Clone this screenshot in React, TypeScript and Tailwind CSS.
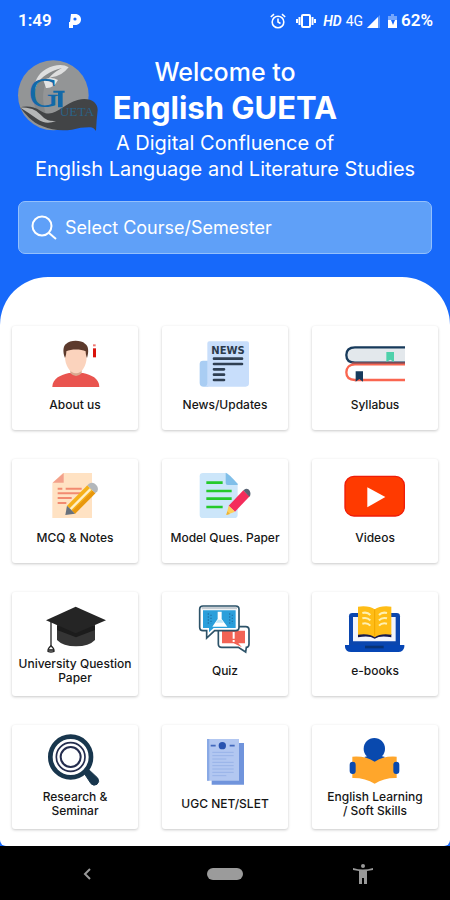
import { ReactNode } from "react";

function AboutIcon() {
    return (
        <>
            <path d="M22 141c0-26 26-37 50-42h42c24 5 49 16 49 42z" fill="#e9544f" />
            <path d="M76 84h34v16q-17 16-34 0z" fill="#d9a88f" />
            <path d="M60 28q32-12 65 0v22c0 26-14 50-32 50S60 76 60 50z" fill="#fbd3bd" />
            <path d="M60 54c-8-20-5-38 4-43 10-11 44-12 56 0 11 6 12 25 6 43-3-6-4-14-4-20-14-7-44-7-58 0 0 6-1 14-4 20z" fill="#5c3a2c" />
            <path d="M144 25h9v27h-9z" fill="#d9120b" />
            <path d="M144 13h8v6h-8z" fill="#ef7771" />
        </>
    );
}

function NewsIcon() {
    return (
        <>
            <path d="M24 62h16v78H26q-12 0-12-12V72q0-10 10-10z" fill="#a9cdf3" />
            <path d="M37 10q0-6 6-6h113q6 0 6 6v120q0 10-10 10H28q9-2 9-12z" fill="#c8defb" />
            <text x="99" y="42" textAnchor="middle" fontSize="30" fontWeight="700" fill="#2b3a4c" className="font-['DejaVu_Sans']">
                NEWS
            </text>
            <path d="M57 56h84M57 72h84M57 88h30M57 104h30M57 120h30" stroke="#2f3f52" strokeWidth="8" strokeLinecap="round" />
        </>
    );
}

function BooksIcon() {
    return (
        <>
            <path d="M180 23H28q-21 3-21 22t21 22h152z" fill="#e3e8ec" />
            <path d="M180 22H30C12 22 4 32 4 45s8 23 26 23h150" fill="none" stroke="#173a5b" strokeWidth="7" />
            <path d="M180 73H30C12 73 4 84 4 97s8 23 26 23h150" fill="none" stroke="#fa6650" strokeWidth="7" />
            <path d="M20 69h160" stroke="#9c5055" strokeWidth="5" />
            <path d="M124 36h23v30l-11-7-12 7z" fill="#4fd1ab" />
            <path d="M32 94h22v31l-11-8-11 8z" fill="#173a5b" />
        </>
    );
}

function NotesIcon() {
    return (
        <>
            <path d="M54 0h87v135H22V30z" fill="#ffe2c3" />
            <path d="M56 0v29H23z" fill="#f3a08b" />
            <path d="M38 47h14M62 47h48M38 61h72M38 75h42M38 90h26" stroke="#f28a70" strokeWidth="6" />
            <path d="m66 98 61-61 24 24-61 61z" fill="#f5b019" />
            <path d="m74 106 60-60 5 5-60 60z" fill="#fff0c6" />
            <path d="m82 114 61-61 8 8-61 61z" fill="#e8970d" />
            <path d="m127 37 5-5q12-6 21 3t4 20l-6 6z" fill="#b3b7bb" />
            <path d="m66 98-5 28 29-4z" fill="#68717c" />
        </>
    );
}

function ModelIcon() {
    return (
        <>
            <path d="M24 0h68l36 36v89q0 10-10 10H24q-10 0-10-10V10Q14 0 24 0z" fill="#cce6fa" />
            <path d="M92-1q6 0 36 33v4H98q-6 0-6-6z" fill="#80bfe9" />
            <path d="M34 29h49M34 54h76M34 77h76M34 102h49" stroke="#24ca2b" strokeWidth="8" />
            <path d="m101 98 44-46 19 18-44 46z" fill="#f42c5b" />
            <path d="m145 52 6-4q9-2 13 5t2 14l-3 4z" fill="#596474" />
            <path d="m101 98 19 18-26 10z" fill="#ffd05a" />
            <path d="m94 126 3-11 8 8z" fill="#eab239" />
        </>
    );
}

function VideoIcon() {
    return (
        <>
            <rect x="0" y="10" width="178" height="119" rx="27" fill="#ff3a00" stroke="#ef1c08" strokeWidth="4" />
            <path d="m67 43 54 29-54 31z" fill="#fff" />
        </>
    );
}

function CapIcon() {
    return (
        <>
            <path d="M36 58h114v44q-18 19-57 19t-57-19z" fill="#353535" />
            <path d="M36 58v14l57 22 57-22V58z" fill="#1c1c1c" />
            <path d="m92 2 91 41-91 39L3 43z" fill="#252525" />
            <path d="M18 48v72" stroke="#252525" strokeWidth="4" />
            <path d="M18 119q10 8 9 17-9 4-18 0-1-9 9-17z" fill="#fff" stroke="#252525" strokeWidth="4" />
            <path d="M10 132h17" stroke="#252525" strokeWidth="5" />
        </>
    );
}

function QuizIcon() {
    return (
        <>
            <path d="M80 62h72q10 0 10 10v42q0 10-8 10l-2 14-22-14H80q-10 0-10-10V72q0-10 10-10z" fill="#fff" stroke="#2d5369" strokeWidth="5" />
            <path d="M81 74h69v38h-20l11 12-25-12H81z" fill="#f26355" />
            <path d="M116 78v20M116 102v6" stroke="#fff" strokeWidth="6" />
            <path d="M24 0h98q10 0 10 10v54q0 10-10 10H59L35 96V74H24q-10 0-10-10V10Q14 0 24 0z" fill="#fff" stroke="#2d5369" strokeWidth="5" />
            <path d="M20 3h106v7H20z" fill="#c6cdd3" />
            <path d="M24 13h98v53H56L42 79V66H24z" fill="#2b9fdb" />
            <path d="M68 17h12v22l17 23H52l16-23z" fill="#fff" />
            <path d="m62 50 7-9h10l7 9z" fill="#c5e8f7" />
            <path d="M40 22v34M48 26v28M104 22v34M112 26v28" stroke="#2276aa" strokeWidth="4" strokeDasharray="4 5" />
        </>
    );
}

function EbookIcon() {
    return (
        <>
            <path d="M22 21h133q10 0 10 10v90H12V31q0-10 10-10z" fill="#0b46ae" />
            <path d="M24 33h128v73H24z" fill="#f1f4fc" />
            <path d="M0 117h178v6q-3 15-18 15H18Q2 138 0 123z" fill="#0646b5" />
            <path d="M60 119h56v8H60z" fill="#083275" />
            <path d="M39 84q35-8 50 2 16-10 50-2v10q-34-6-50 4-15-10-50-4z" fill="#14194d" />
            <path d="M39 2q34-4 50 8 17-12 50-8v84q-33-5-50 8-16-13-50-8z" fill="#ffbd16" />
            <path d="M89 10v83" stroke="#f0a500" strokeWidth="3" />
            <path d="M52 21q15-4 24 6M52 37q15-4 24 6M52 53q15-4 24 6M102 27q9-10 24-6M102 43q9-10 24-6M102 59q9-10 24-6" fill="none" stroke="#fff0b2" strokeWidth="6" />
        </>
    );
}

function ResearchIcon() {
    return (
        <>
            <path d="m113 96 12-10 33 31q7 11-2 19-10 6-18-2z" fill="#18364d" stroke="#18364d" strokeWidth="3" strokeLinejoin="round" />
            <circle cx="77" cy="54" r="61" fill="#fff" stroke="#18364d" strokeWidth="14" />
            <circle cx="77" cy="54" r="43" fill="none" stroke="#242d4e" strokeWidth="5" />
            <circle cx="77" cy="54" r="30" fill="none" stroke="#242d4e" strokeWidth="6" />
        </>
    );
}

function PapersIcon() {
    return (
        <>
            <path d="M50 12h97v125H50z" fill="#7094dc" />
            <path d="M36 0h96v125H36z" fill="#b2c7f1" />
            <path d="M36 0h7v125h-7z" fill="#89a9e5" />
            <circle cx="82" cy="20" r="11" fill="#2853b0" />
            <path d="M47 20h15M104 20h15" stroke="#4269bd" strokeWidth="5" />
            <path d="M52 40h64M52 50h64M52 60h42M52 70h64M52 80h64M52 90h64M52 100h64M52 110h42" stroke="#98b3e8" strokeWidth="3" />
        </>
    );
}

function ReaderIcon() {
    return (
        <>
            <path d="M51 66q6-18 38-18t38 18L89 76z" fill="#0949ae" />
            <circle cx="88" cy="29" r="32" fill="#0949ae" />
            <path d="M22 53q40-3 67 15 26-18 66-15v64q-38-1-66 17-29-18-67-17z" fill="#ffa62b" />
            <rect x="14" y="68" width="18" height="37" rx="9" fill="#0949ae" />
            <rect x="145" y="68" width="18" height="37" rx="9" fill="#0949ae" />
        </>
    );
}

function Logo() {
    return (
        <svg viewBox="0 0 240 216" className="h-[72px] w-[80px] overflow-visible" aria-hidden="true">
            <ellipse cx="106" cy="106" rx="106" ry="105" fill="#939596" />
            <path d="M68 166C30 110 42 34 106 18q28-8 46 4-22 28-52 30c-42 16-50 72-14 112z" fill="#dedfdf" />
            <path d="M54 152C34 92 58 42 132 24 80 50 64 92 84 164z" fill="#858889" />
            <path d="M76 60q24-12 44 0-14 26-36 24z" fill="#e3e4e4" />
            <path d="M5 142q34-8 62 10c42 28 64-20 112-32 36-9 60 6 60 30l-3 30-2 33q-8-14-22-11-24 0-50 7-48 7-88-10c-36-13-50-37-69-57z" fill="#424446" />
            <path d="M5 142q44 0 63 22t46 19Q84 196 59 178T5 142z" fill="#b4b6b7" />
            <text x="32" y="142" fontSize="126" fill="#1269a8" className="font-['Liberation_Serif']">
                G
            </text>
            <path d="M106 92h34v6h-6v44h-14V98h-14z" fill="#1269a8" />
            <text x="125" y="167" fontSize="40" fill="#2a6388" className="font-['Liberation_Serif']">
                UETA
            </text>
        </svg>
    );
}

type Tile = { label: ReactNode; icon: ReactNode };

const tiles: Tile[] = [
    { label: "About us", icon: <AboutIcon /> },
    { label: "News/Updates", icon: <NewsIcon /> },
    { label: "Syllabus", icon: <BooksIcon /> },
    { label: "MCQ & Notes", icon: <NotesIcon /> },
    { label: "Model Ques. Paper", icon: <ModelIcon /> },
    { label: "Videos", icon: <VideoIcon /> },
    { label: <>University Question<br />Paper</>, icon: <CapIcon /> },
    { label: "Quiz", icon: <QuizIcon /> },
    { label: "e-books", icon: <EbookIcon /> },
    { label: <>Research &<br />Seminar</>, icon: <ResearchIcon /> },
    { label: "UGC NET/SLET", icon: <PapersIcon /> },
    { label: <>English Learning<br />/ Soft Skills</>, icon: <ReaderIcon /> },
];

function StatusBar() {
    return (
        <div className="flex h-[42px] items-center justify-between pl-[18px] pr-[17px] font-[Roboto,sans-serif] text-[17px] font-semibold">
            <div className="flex items-center gap-4">
                <span>1:49</span>
                <svg viewBox="0 0 14 16" className="h-4 w-[14px]" aria-hidden="true">
                    <path d="M3 1h4c8 0 8 11 0 11H5v3H1V9h1z" fill="#fff" />
                    <circle cx="7" cy="6" r="1.6" fill="#1769fa" />
                </svg>
            </div>
            <div className="flex items-center">
                <svg viewBox="0 0 16 16" className="mr-[10px] size-4" fill="none" stroke="#fff" strokeWidth="1.6" aria-hidden="true">
                    <circle cx="8" cy="9" r="5.8" />
                    <path d="M8 5.500V9l2.500 1.500M.8 4 4 1.200M15.200 4 12 1.200" />
                </svg>
                <svg viewBox="0 0 20 16" className="mr-[7px] h-4 w-5" fill="none" stroke="#fff" strokeWidth="2" aria-hidden="true">
                    <rect x="6" y="2" width="8" height="12" rx="1" />
                    <path d="M3.500 4v8M16.500 4v8M1 6v4M19 6v4" />
                </svg>
                <span className="mr-1 text-[14px] italic">HD</span>
                <span className="mr-1 text-[14px] font-normal">4G</span>
                <svg viewBox="0 0 14 13" className="mr-[7px] h-[13px] w-[14px]" aria-hidden="true">
                    <path d="M0 13 13 0v13z" fill="#5b96fb" />
                    <path d="M0 13 11 2v11z" fill="#fff" />
                </svg>
                <svg viewBox="0 0 9 14" className="mr-1 h-[14px] w-[9px]" aria-hidden="true">
                    <path d="M3 0h3v2h3v4H0V2h3z" fill="#74a6fc" />
                    <path d="M0 6h9v8H0z" fill="#fff" />
                    <path d="m3 6 2 5 2-5z" fill="#1769fa" />
                </svg>
                <span>62%</span>
            </div>
        </div>
    );
}

export default function App() {
    return (
        <div className="flex min-h-screen flex-col bg-[#1769fa] font-[Inter,sans-serif]">
            <header className="px-[18px] pb-[23px] text-white">
                <div className="-mx-[18px]">
                    <StatusBar />
                </div>
                <div className="relative pt-4 text-center">
                    <div className="absolute left-0 top-[18px]">
                        <Logo />
                    </div>
                    <p className="text-[25px] leading-7 font-medium">Welcome to</p>
                    <h1 className="text-[31px] leading-[44px] font-bold">English GUETA</h1>
                    <p className="text-[20px] leading-[26px] font-normal">
                        A Digital Confluence of
                        <br />
                        English Language and Literature Studies
                    </p>
                </div>
                <label className="mt-[19px] flex h-[53px] items-center rounded-[7px] border border-[#94c0fc] bg-[#5fa0f8] px-3">
                    <svg viewBox="0 0 26 26" className="mr-2 size-[26px]" fill="none" stroke="#fff" strokeWidth="2" aria-hidden="true">
                        <circle cx="11" cy="11" r="9.500" />
                        <path d="m18 18 7 6" />
                    </svg>
                    <input
                        type="text"
                        aria-label="Select Course/Semester"
                        placeholder="Select Course/Semester"
                        className="min-w-0 flex-1 bg-transparent text-[18px] font-normal outline-none placeholder:text-white"
                    />
                </label>
            </header>
            <main className="flex-1 rounded-t-[48px] rounded-b-[6px] bg-white px-3 pt-[49px] pb-[17px]">
                <div className="grid grid-cols-3 gap-x-6 gap-y-[29px]">
                    {tiles.map((tile, i) => (
                        <button key={i} type="button" className="flex h-[104px] flex-col items-center rounded-[3px] bg-white pt-[14px] shadow-[0_1px_3px_rgba(0,0,0,0.22)]">
                            <svg viewBox="0 0 180 144" className="h-12 w-[60px] shrink-0 overflow-visible" aria-hidden="true">
                                {tile.icon}
                            </svg>
                            <span className="flex h-[34px] items-center text-[12px] leading-[14px] font-medium whitespace-nowrap text-[#161616]">
                                <span>{tile.label}</span>
                            </span>
                        </button>
                    ))}
                </div>
            </main>
            <nav className="grid h-[55px] grid-cols-[174px_1fr_174px] items-center justify-items-center bg-black">
                <button type="button" aria-label="Back">
                    <svg viewBox="0 0 8 12" className="h-3 w-2" fill="none" stroke="#999" strokeWidth="2" aria-hidden="true">
                        <path d="M7 1 2 6l5 5" />
                    </svg>
                </button>
                <button type="button" aria-label="Home" className="h-3 w-9 rounded-full bg-[#9b9b9b]" />
                <button type="button" aria-label="Accessibility">
                    <svg viewBox="0 0 20 20" className="size-5" fill="#999" aria-hidden="true">
                        <circle cx="10" cy="2" r="2" />
                        <path d="M0 4q10 3 20 0v2l-6 1v13h-3v-6H9v6H6V7L0 6z" />
                    </svg>
                </button>
            </nav>
        </div>
    );
}
